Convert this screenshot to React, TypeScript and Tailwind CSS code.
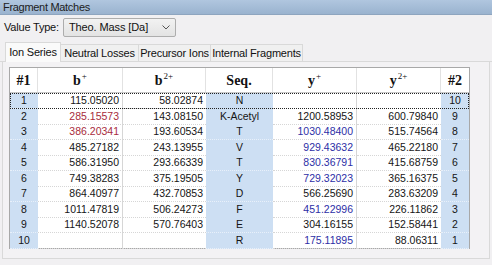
import { FC } from "react";

type Row = {
  n1: string;
  b1: string;
  b2: string;
  seq: string;
  y1: string;
  y2: string;
  n2: string;
  bRed?: boolean;
  yBlue?: boolean;
};

const rows: Row[] = [
  { n1: "1", b1: "115.05020", b2: "58.02874", seq: "N", y1: "", y2: "", n2: "10" },
  { n1: "2", b1: "285.15573", b2: "143.08150", seq: "K-Acetyl", y1: "1200.58953", y2: "600.79840", n2: "9", bRed: true },
  { n1: "3", b1: "386.20341", b2: "193.60534", seq: "T", y1: "1030.48400", y2: "515.74564", n2: "8", bRed: true, yBlue: true },
  { n1: "4", b1: "485.27182", b2: "243.13955", seq: "V", y1: "929.43632", y2: "465.22180", n2: "7", yBlue: true },
  { n1: "5", b1: "586.31950", b2: "293.66339", seq: "T", y1: "830.36791", y2: "415.68759", n2: "6", yBlue: true },
  { n1: "6", b1: "749.38283", b2: "375.19505", seq: "Y", y1: "729.32023", y2: "365.16375", n2: "5", yBlue: true },
  { n1: "7", b1: "864.40977", b2: "432.70853", seq: "D", y1: "566.25690", y2: "283.63209", n2: "4" },
  { n1: "8", b1: "1011.47819", b2: "506.24273", seq: "F", y1: "451.22996", y2: "226.11862", n2: "3", yBlue: true },
  { n1: "9", b1: "1140.52078", b2: "570.76403", seq: "E", y1: "304.16155", y2: "152.58441", n2: "2" },
  { n1: "10", b1: "", b2: "", seq: "R", y1: "175.11895", y2: "88.06311", n2: "1", yBlue: true },
];

const cols = "grid grid-cols-[28px_85px_83px_67px_84px_84px_28px]";

const HeadCell: FC<{ children: React.ReactNode; last?: boolean }> = ({ children, last }) => (
  <div
    className={
      "flex items-center justify-center bg-white " +
      (last ? "" : "border-r border-[#e2e2e2]")
    }
  >
    {children}
  </div>
);

const Sup: FC<{ children: React.ReactNode }> = ({ children }) => (
  <span className="relative -top-[4px] ml-[1px] text-[9px] font-normal leading-none">{children}</span>
);

const App: FC = () => {
  return (
    <div className="w-[492px] h-[265px] overflow-hidden bg-[#f1f0f2] text-[#111] font-['Liberation_Sans',Arial,sans-serif] select-none">
      <div className="h-[15px] bg-gradient-to-b from-[#b0c6df] to-[#9ab3cf] border-b border-[#8ea5bf] pl-[3px] text-[11px] leading-[14px] tracking-[-0.3px] text-[#1c1c1c]">
        Fragment Matches
      </div>

      <div className="mt-[3px] h-[19px] flex items-center pl-[4px]">
        <span className="text-[11px] tracking-[-0.2px]">Value Type:</span>
        <div className="ml-[4px] w-[113px] h-[19px] flex items-center justify-between border border-[#adadad] rounded-[2px] bg-gradient-to-b from-[#f2f2f2] to-[#e3e3e3] pl-[5px] pr-[5px]">
          <span className="text-[11px] tracking-[-0.1px]">Theo. Mass [Da]</span>
          <svg width="8" height="5" viewBox="0 0 8 5">
            <polyline points="0.5,0.5 4,4 7.5,0.5" fill="none" stroke="#555" strokeWidth="1" />
          </svg>
        </div>
      </div>

      <div className="mt-[6px] h-[19px] flex items-end border-b border-[#d9d9d9] pl-[5px] text-[11px] tracking-[-0.2px]">
        <div className="h-[20px] w-[56px] -mb-px flex items-center justify-center bg-[#fafafa] border border-b-0 border-[#d9d9d9]">
          Ion Series
        </div>
        <div className="h-[17px] w-[78px] flex items-center justify-center bg-[#f0f0f0] border border-l-0 border-b-0 border-[#d9d9d9]">
          Neutral Losses
        </div>
        <div className="h-[17px] w-[72px] flex items-center justify-center bg-[#f0f0f0] border border-l-0 border-b-0 border-[#d9d9d9]">
          Precursor Ions
        </div>
        <div className="h-[17px] w-[92px] flex items-center justify-center bg-[#f0f0f0] border border-l-0 border-b-0 border-[#d9d9d9]">
          Internal Fragments
        </div>
      </div>

      <div className="ml-[2px] w-[488px] h-[197px] border border-t-0 border-[#d9d9d9] bg-[#f3f2f4] pt-[5px] pl-[6px]">
        <div className="w-[461px] border border-[#a8a8a8] bg-white">
          <div className={cols + " h-[25px] border-b border-[#c8c8c8] font-['Liberation_Serif',serif] font-bold text-[14px] text-[#111]"}>
            <HeadCell>#1</HeadCell>
            <HeadCell>
              b<Sup>+</Sup>
            </HeadCell>
            <HeadCell>
              b<Sup>2+</Sup>
            </HeadCell>
            <HeadCell>Seq.</HeadCell>
            <HeadCell>
              y<Sup>+</Sup>
            </HeadCell>
            <HeadCell>
              y<Sup>2+</Sup>
            </HeadCell>
            <HeadCell last>#2</HeadCell>
          </div>

          {rows.map((r, i) => (
            <div
              key={r.n1}
              className={cols + " relative h-[15.5px] text-[10.5px] leading-[15px] text-[#151515]"}
            >
              <div className="bg-[#cddff3] text-center border-b border-dotted border-[#e8f0fa]">{r.n1}</div>
              <div
                className={
                  "text-right pr-[3px] border-r border-b border-dotted [border-right-style:solid] border-[#d6d6d6] " +
                  (r.bRed ? "text-[#a82c3c]" : "")
                }
              >
                {r.b1}
              </div>
              <div className="text-right pr-[3px] border-b border-dotted border-[#d6d6d6]">{r.b2}</div>
              <div className="bg-[#cddff3] text-center border-b border-dotted border-[#e8f0fa]">{r.seq}</div>
              <div
                className={
                  "text-right pr-[3px] border-r border-b border-dotted [border-right-style:solid] border-[#d6d6d6] " +
                  (r.yBlue ? "text-[#2d2fa6]" : "")
                }
              >
                {r.y1}
              </div>
              <div className="text-right pr-[3px] border-b border-dotted border-[#d6d6d6]">{r.y2}</div>
              <div className="bg-[#cddff3] text-center border-b border-dotted border-[#e8f0fa]">{r.n2}</div>
              {i === 0 && (
                <div className="absolute inset-0 border border-dotted border-[#222] pointer-events-none" />
              )}
            </div>
          ))}
        </div>
      </div>
    </div>
  );
};

export default App;
